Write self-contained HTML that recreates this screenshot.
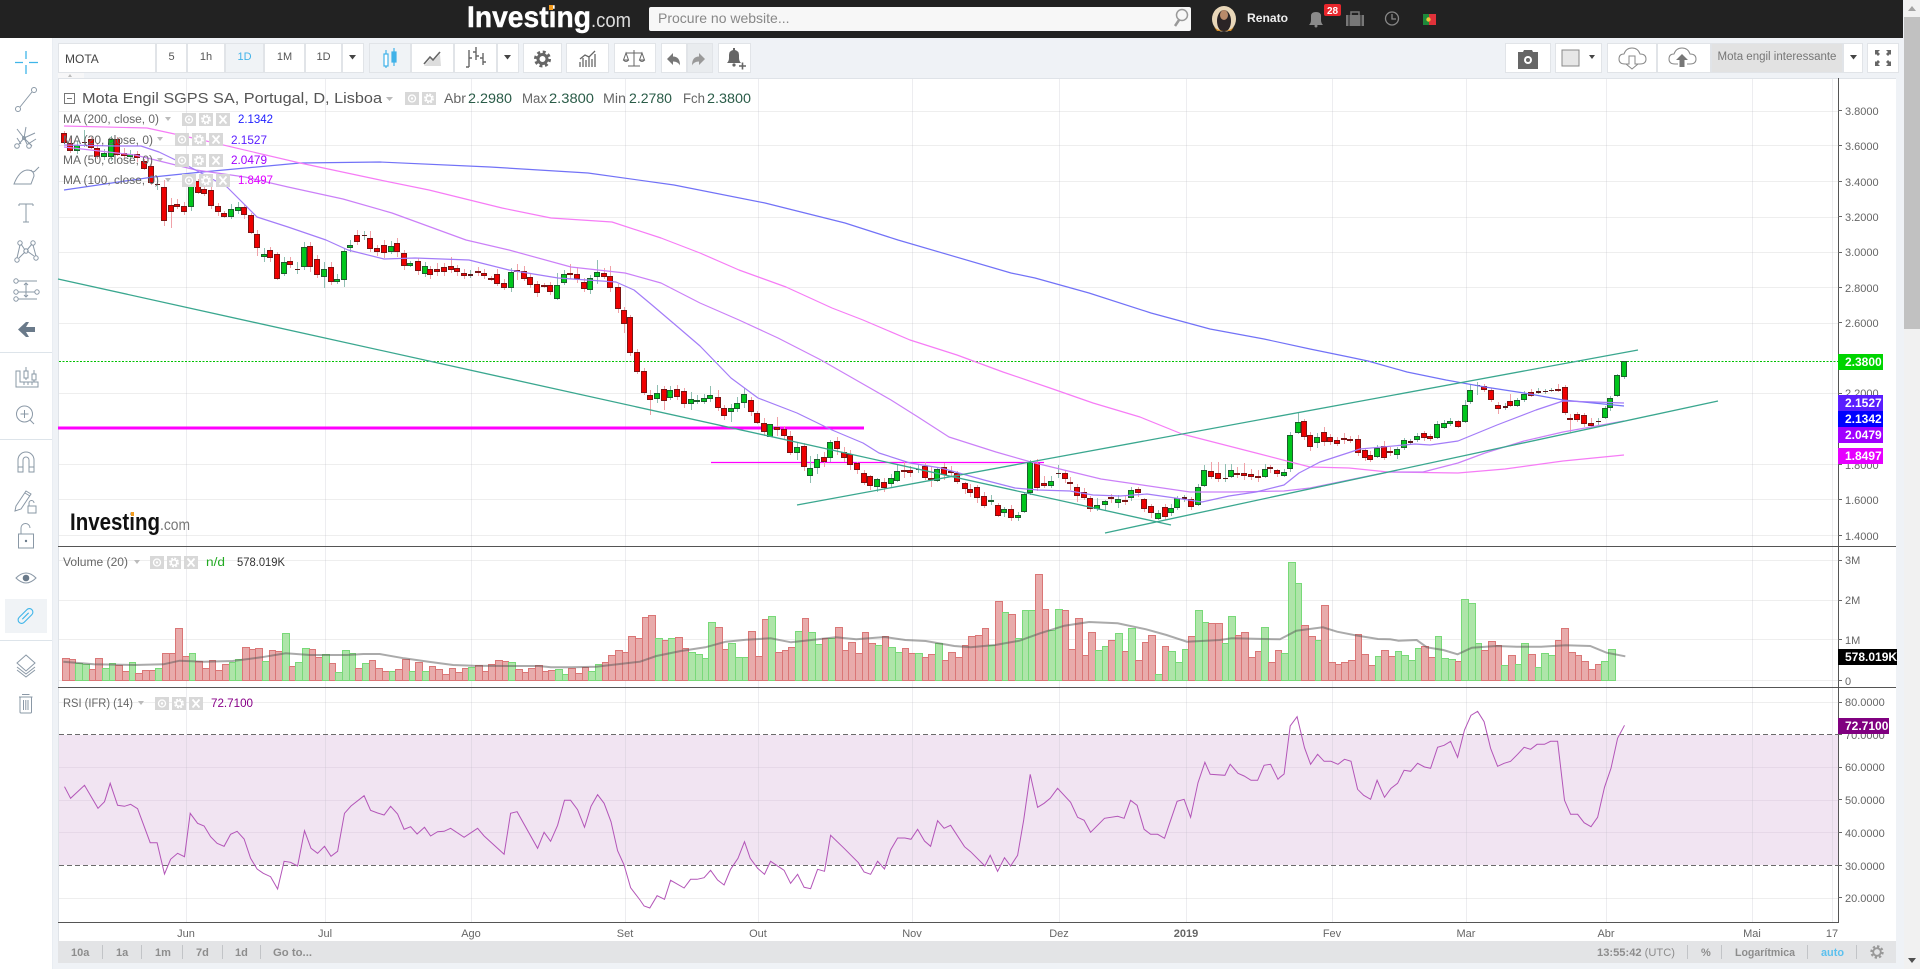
<!DOCTYPE html>
<html lang="pt"><head><meta charset="utf-8"><title>Mota Engil SGPS SA - Investing.com</title>
<style>
html,body{margin:0;padding:0;width:1920px;height:969px;overflow:hidden;background:#eff2f6;font-family:"Liberation Sans",sans-serif}
.a{position:absolute;box-sizing:border-box}
.b{position:absolute;top:43px;height:30px;background:#fff;border:1px solid #e1e4e8;box-sizing:border-box;color:#555;font-size:11px;line-height:27px;text-align:center}
svg{position:absolute;left:0;top:0}
text{font-family:"Liberation Sans",sans-serif}
</style></head><body>
<div class="a" style="left:0;top:0;width:1903px;height:38px;background:#222"></div>
<div class="a" style="left:649px;top:7px;width:542px;height:24px;background:#f7f7f7;border-radius:2px;color:#888;font-size:14px;line-height:23px;padding-left:9px">Procure no website...</div>
<div class="a" style="left:0;top:38px;width:52px;height:931px;background:#fff"></div>
<div class="a" style="left:5px;top:599px;width:42px;height:34px;background:#f0f3f6"></div>
<div class="a" style="left:58px;top:78px;width:1838px;height:863px;background:#fff;border:1px solid #dfe3e8;border-width:1px 0 0 1px"></div>
<div class="a" style="left:58px;top:941px;width:1838px;height:22px;background:#e3e4e6"></div>
<div class="a" style="left:1904px;top:0;width:16px;height:969px;background:#f1f1f1"></div>
<div class="a" style="left:1904px;top:17px;width:16px;height:312px;background:#c1c1c1"></div>

<div class="b" style="left:58px;width:98px;text-align:left;padding-left:6px;font-size:12px;line-height:30px;color:#444">MOTA</div>
<div class="b" style="left:156px;width:31px">5</div>
<div class="b" style="left:187px;width:38px">1h</div>
<div class="b" style="left:225px;width:39px;background:#f0f3f6;color:#41b2e8">1D</div>
<div class="b" style="left:264px;width:41px">1M</div>
<div class="b" style="left:305px;width:37px">1D</div>
<div class="b" style="left:342px;width:22px"></div>
<div class="b" style="left:369px;width:42px;background:#f0f3f6"></div>
<div class="b" style="left:411px;width:43px"></div>
<div class="b" style="left:454px;width:43px"></div>
<div class="b" style="left:497px;width:22px"></div>
<div class="b" style="left:523px;width:39px"></div>
<div class="b" style="left:566px;width:43px"></div>
<div class="b" style="left:614px;width:42px"></div>
<div class="b" style="left:661px;width:26px"></div>
<div class="b" style="left:687px;width:26px;background:#e9ecef"></div>
<div class="b" style="left:718px;width:33px"></div>
<div class="b" style="left:1505px;width:46px"></div>
<div class="b" style="left:1555px;width:47px"></div>
<div class="b" style="left:1607px;width:50px"></div>
<div class="b" style="left:1657px;width:54px"></div>
<div class="b" style="left:1711px;width:132px;background:#e2e2e2;color:#777;font-size:11.5px;line-height:27px;white-space:nowrap">Mota engil interessante</div>
<div class="b" style="left:1843px;width:20px"></div>
<div class="b" style="left:1867px;width:32px"></div>

<svg width="1920" height="969" viewBox="0 0 1920 969">
<defs>
<g id="t2">
<rect width="14" height="13" fill="#d8d8d8"/><rect x="17" width="14" height="13" fill="#d8d8d8"/>
<circle cx="7" cy="6.500" r="3.500" fill="none" stroke="#fff" stroke-width="1.300"/><circle cx="7" cy="6.500" r="1.200" fill="#fff"/>
<circle cx="24" cy="6.500" r="3.800" fill="none" stroke="#fff" stroke-width="2.400" stroke-dasharray="1.800 1.200"/><circle cx="24" cy="6.500" r="2.800" fill="none" stroke="#fff" stroke-width="1.500"/>
</g>
<g id="t3">
<use href="#t2"/>
<rect x="34" width="14" height="13" fill="#d8d8d8"/><path d="M37.500 2.500l7 8M44.500 2.500l-7 8" stroke="#fff" stroke-width="1.800"/>
</g>
</defs>
<g id="chart"></g>

<!-- Top logo -->
<text x="467" y="27" font-size="30" font-weight="bold" fill="#fff" stroke="#fff" stroke-width=".4" textLength="124" lengthAdjust="spacingAndGlyphs">Investing</text>
<text x="591" y="27" font-size="20" fill="#ddd" textLength="40" lengthAdjust="spacingAndGlyphs">.com</text>
<rect x="549" y="5" width="4" height="5" fill="#f39c1f"/>
<!-- Search icon -->
<circle cx="1182" cy="15" r="5.500" fill="none" stroke="#999" stroke-width="1.500"/><path d="M1179 20l-4 6" stroke="#999" stroke-width="2.500"/>
<!-- Avatar -->
<ellipse cx="1224" cy="19" rx="12" ry="13" fill="#e8d6b8"/><ellipse cx="1224" cy="21" rx="7" ry="11" fill="#2b2426"/><ellipse cx="1224" cy="15" rx="4" ry="5" fill="#b98a6a"/><path d="M1214 27q10 8 20 0l-3 4h-14z" fill="#d28a22"/>
<text x="1247" y="22" font-size="12" font-weight="bold" fill="#eee" textLength="41" lengthAdjust="spacingAndGlyphs">Renato</text>
<!-- Bell -->
<path d="M1309 25q2-2 2-5v-4q0-4 5-4t5 4v4q0 3 2 5z" fill="#8a8a8a"/><circle cx="1316" cy="26" r="1.500" fill="#8a8a8a"/>
<rect x="1324" y="4" width="17" height="12" rx="2" fill="#e8262c"/><text x="1332.500" y="14" font-size="10" font-weight="bold" fill="#fff" text-anchor="middle">28</text>
<!-- Briefcase -->
<rect x="1346" y="15" width="18" height="11" fill="#777"/><path d="M1351 15v-3h8v3" fill="none" stroke="#777" stroke-width="1.500"/><path d="M1349 15v11M1361 15v11" stroke="#222"/>
<!-- Clock -->
<circle cx="1392" cy="18.500" r="6.500" fill="none" stroke="#888" stroke-width="1.300"/><path d="M1392 14v5h4" fill="none" stroke="#888" stroke-width="1.300"/>
<!-- Flag -->
<rect x="1423" y="14" width="6" height="11" fill="#1d8a3a"/><rect x="1429" y="14" width="7" height="11" fill="#e0323a"/><circle cx="1428.500" cy="19.500" r="2.200" fill="#e8c33a"/>

<!-- Toolbar icons -->
<g fill="#444"><path d="M349 55h7l-3.500 4.500zM504 55h7l-3.500 4.500zM1589 55h6l-3 4zM1850 55h7l-3.500 4.500z"/></g>
<g stroke="#41b2e8" fill="none" stroke-width="1.200"><rect x="384" y="54" width="4" height="12" fill="#fff"/><path d="M386 50v4M386 66v2M394 48v4M394 62v4"/><rect x="392" y="52" width="4" height="10" fill="#41b2e8"/></g>
<path d="M424 66l6-7 3 2 7-7 1 12z" fill="#ddd"/><path d="M424 64l6-7 3 3 7-8" fill="none" stroke="#666" stroke-width="1.600"/>
<path d="M469 50v17M466 67h3M469 58h3M476 47v13M473 52h3M476 56h3M483 53v12M480 58h3M483 62h3" fill="none" stroke="#666" stroke-width="1.400"/>
<g transform="translate(542.500 59)" fill="none" stroke="#666"><circle r="7" stroke-width="3" stroke-dasharray="2.900 2.600"/><circle r="4.500" stroke-width="3"/></g>
<path d="M580 67V62M583 67V58M586 67V60M589 67V56M592 67V59M595 67V54M580 59l5-4 4 2 6-6" fill="none" stroke="#666" stroke-width="1.300"/>
<path d="M634 50v16M628 66h12M626 53h16M626 53l-2.500 7h5zM642 53l-2.500 7h5zM623.500 60q2.500 3 5 0M639.500 60q2.500 3 5 0" fill="none" stroke="#666" stroke-width="1"/>
<path d="M667 59l6-6v3.500q7 0 7 9q-2-4-7-4v3.500z" fill="#777"/>
<path d="M705 59l-6-6v3.500q-7 0-7 9q2-4 7-4v3.500z" fill="#999"/>
<path d="M727 63q2-2 2-5v-3q0-4 4-5v-2h2v2q4 1 4 5v3q0 3 2 5z" fill="#666"/><circle cx="734" cy="65" r="1.600" fill="#666"/><path d="M739 66h7M742.500 62.500v7" stroke="#666" stroke-width="1.600"/>
<path d="M1518 52h5l1-2h8l1 2h5v17h-20z" fill="#666"/><circle cx="1528" cy="60" r="4" fill="#fff"/><circle cx="1528" cy="60" r="2" fill="#666"/>
<rect x="1562" y="50" width="17" height="16" fill="#e7e7e7" stroke="#888"/>
<g fill="none" stroke="#888"><path d="M1628 64h-3q-6 0-6-5t5-5q2-6 8-6t8 6q6 0 6 5t-6 5h-3"/><path d="M1629 56h6v8h3l-6 5-6-5h3z"/><path d="M1678 64h-3q-6 0-6-5t5-5q2-6 8-6t8 6q6 0 6 5t-6 5h-3"/></g>
<path d="M1682 54l6 6h-3.500v7h-5v-7h-3.500z" fill="#777"/>
<path d="M1875 50h5l-2 2 2 2-2 2-2-2-1 1zM1891 50h-5l2 2-2 2 2 2 2-2 1 1zM1875 66h5l-2-2 2-2-2-2-2 2-1-1zM1891 66h-5l2-2-2-2 2-2 2 2 1-1z" fill="#666"/>

<!-- Sidebar lines -->
<path d="M0 352.500h52M0 439.500h52M0 640.500h52" stroke="#dde4ea"/>
<path d="M52.500 38v931" stroke="#e9edf2"/>
<!-- Sidebar icons -->
<path d="M26 51v8M26 65v9M15 62.500h8M29 62.500h9" stroke="#3fb5e9" stroke-width="1.300" fill="none"/>
<g fill="none" stroke="#8a98a6" stroke-width="1">
<circle cx="18" cy="109" r="2.500"/><circle cx="34" cy="90" r="2.500"/><path d="M20 107l12-15"/>
<path d="M17 129l7 9 8 8M17 138l4 6M24 138l-5 6M26 127l-2 11M35 133l-11 5 3 6M36 139l-8 5"/><circle cx="17" cy="146" r="2.300"/><circle cx="29" cy="146" r="2.300"/><circle cx="24" cy="138" r="1.500"/>
<path d="M14 184h17l3-8q0-6-7-6q-8 1-13 14zM31 170q2 3 4 1t4-4"/>
<path d="M19 204h14M19 204v2M33 204v2M26 204v18M23 222h6"/>
<circle cx="20" cy="243" r="2.200"/><circle cx="33" cy="243" r="2.200"/><circle cx="26" cy="251" r="2.200"/><circle cx="17" cy="260" r="2.200"/><circle cx="36" cy="258" r="2.200"/><path d="M21 244l4 6M32 244l-5 6M19 258l6-6M34 256l-7-5M17 258l3-13M36 256l-3-11"/>
<circle cx="16" cy="281" r="2.200"/><circle cx="16" cy="292" r="2.200"/><circle cx="16" cy="299" r="2.200"/><circle cx="37" cy="292" r="2.200"/><path d="M18 281h19M18 292h17M18 299h19M26 283v14M24 285l2-2 2 2M24 295l2 2 2-2"/>
</g>
<path d="M18 329.500l8-7.500h3l-3 5h9v5h-9l3 5h-3z" fill="#6a7a8a"/>
<g fill="none" stroke="#8a98a6" stroke-width="1">
<path d="M16 371v16h22v-5H20v-11zM24 382v3M28 382v3M32 382v3"/><rect x="24" y="371" width="4" height="7"/><path d="M26 367v4M26 378v2"/><rect x="32" y="374" width="4" height="6"/><path d="M34 370v4M34 380v2"/>
<circle cx="24.500" cy="414" r="8"/><path d="M24.500 410v8M20.500 414h8M30 420l4 4"/>
<path d="M18 472V460a8 8 0 0 1 16 0v12h-5v-12a3 3 0 0 0-6 0v12zM18 467h5M29 467h5"/>
<path d="M16 506l10-15 5 3-10 15-6 2zM25 493l5 3M36 506h-8v7h8zM29 506v-3a2.500 2.500 0 0 1 5 0"/>
<rect x="18.500" y="534" width="15" height="14"/><path d="M21 534v-6a4.500 4.500 0 0 1 9 0"/>
<path d="M16 578q10-10 20 0q-10 10-20 0z"/>
</g>
<circle cx="26" cy="578" r="3.300" fill="#6a7a8a"/><circle cx="26" cy="541" r="1.200" fill="#6a7a8a"/>
<g fill="none" stroke="#3fb5e9" stroke-width="1.100" transform="rotate(-45 25.500 616)"><rect x="16.500" y="612.500" width="18" height="7" rx="3.500"/><path d="M21 616h9"/></g>
<g fill="none" stroke="#8a98a6" stroke-width="1">
<path d="M26 655l9 8-9 8-9-8zM17 667l9 7 9-7M17 670l9 7 9-7"/>
<rect x="20" y="697" width="11.500" height="16" rx="1"/><path d="M19 697h13.500M22 694.500h7.500M23.500 700v10M25.800 700v10M28 700v10"/>
</g>

<!-- Scroll arrows, panel tab -->
<path d="M1908 11l4-5 4 5z" fill="#a3a3a3"/><path d="M1908 958l4 5 4-5z" fill="#505050"/>
<rect x="58" y="73" width="26" height="5" fill="#f7f7f8"/><path d="M68 77l2-3 2 3z" fill="#bbb"/>

<!-- Main legend -->
<rect x="64.500" y="93.500" width="10" height="10" fill="none" stroke="#777"/><path d="M67 98.500h5" stroke="#777"/>
<text x="82" y="103" font-size="15" fill="#555" textLength="300" lengthAdjust="spacingAndGlyphs">Mota Engil SGPS SA, Portugal, D, Lisboa</text>
<path d="M386 97h7l-3.500 4z" fill="#bbb"/>
<use href="#t2" x="405" y="92"/>
<g font-size="13.500"><text x="444" y="103" fill="#666" textLength="22" lengthAdjust="spacingAndGlyphs">Abr</text><text x="468" y="103" fill="#2a5c48" textLength="44" lengthAdjust="spacingAndGlyphs">2.2980</text>
<text x="522" y="103" fill="#666" textLength="25" lengthAdjust="spacingAndGlyphs">Max</text><text x="549" y="103" fill="#2a5c48" textLength="45" lengthAdjust="spacingAndGlyphs">2.3800</text>
<text x="603" y="103" fill="#666" textLength="23" lengthAdjust="spacingAndGlyphs">Min</text><text x="629" y="103" fill="#2a5c48" textLength="43" lengthAdjust="spacingAndGlyphs">2.2780</text>
<text x="683" y="103" fill="#666" textLength="22" lengthAdjust="spacingAndGlyphs">Fch</text><text x="707" y="103" fill="#2a5c48" textLength="44" lengthAdjust="spacingAndGlyphs">2.3800</text></g>

<g font-size="11.500" fill="#666">
<text x="63" y="123" textLength="96" lengthAdjust="spacingAndGlyphs">MA (200, close, 0)</text>
<text x="63" y="144" textLength="90" lengthAdjust="spacingAndGlyphs">MA (20, close, 0)</text>
<text x="63" y="164" textLength="90" lengthAdjust="spacingAndGlyphs">MA (50, close, 0)</text>
<text x="63" y="184" textLength="96" lengthAdjust="spacingAndGlyphs">MA (100, close, 0)</text>
<text x="63" y="566" textLength="65" lengthAdjust="spacingAndGlyphs">Volume (20)</text>
<text x="63" y="707" textLength="70" lengthAdjust="spacingAndGlyphs">RSI (IFR) (14)</text>
</g>
<use href="#t3" x="182" y="113"/><use href="#t3" x="175" y="133"/><use href="#t3" x="175" y="154"/><use href="#t3" x="182" y="174"/><use href="#t3" x="150" y="556"/><use href="#t3" x="155" y="697"/>
<g fill="#bbb"><path d="M165 117h6l-3 4zM157 137h6l-3 4zM157 158h6l-3 4zM165 178h6l-3 4zM134 560h6l-3 4zM138 701h6l-3 4z"/></g>
<g font-size="11.500">
<text x="238" y="123" fill="#2222ff" textLength="35" lengthAdjust="spacingAndGlyphs">2.1342</text>
<text x="231" y="144" fill="#5a1eff" textLength="36" lengthAdjust="spacingAndGlyphs">2.1527</text>
<text x="231" y="164" fill="#a000ff" textLength="36" lengthAdjust="spacingAndGlyphs">2.0479</text>
<text x="238" y="184" fill="#e000ff" textLength="35" lengthAdjust="spacingAndGlyphs">1.8497</text>
<text x="206" y="566" fill="#22aa22" textLength="19" lengthAdjust="spacingAndGlyphs">n/d</text>
<text x="237" y="566" fill="#333" textLength="48" lengthAdjust="spacingAndGlyphs">578.019K</text>
<text x="211" y="707" fill="#880088" textLength="42" lengthAdjust="spacingAndGlyphs">72.7100</text>
</g>

<!-- Watermark -->
<text x="70" y="530" font-size="24" font-weight="bold" fill="#111" textLength="90" lengthAdjust="spacingAndGlyphs">Investing</text>
<text x="160" y="530" font-size="16" fill="#777" textLength="30" lengthAdjust="spacingAndGlyphs">.com</text>
<rect x="131" y="512" width="3" height="4" fill="#f39c1f"/>

<!-- Y axis -->
<g font-size="11" fill="#666">
<text x="1845" y="115">3.8000</text><text x="1845" y="150">3.6000</text><text x="1845" y="186">3.4000</text><text x="1845" y="221">3.2000</text><text x="1845" y="256">3.0000</text><text x="1845" y="292">2.8000</text><text x="1845" y="327">2.6000</text><text x="1845" y="397">2.2000</text><text x="1845" y="469">1.8000</text><text x="1845" y="504">1.6000</text><text x="1845" y="540">1.4000</text>
<text x="1845" y="564">3M</text><text x="1845" y="604">2M</text><text x="1845" y="644">1M</text><text x="1845" y="685">0</text>
<text x="1845" y="706">80.0000</text><text x="1845" y="739">70.0000</text><text x="1845" y="771">60.0000</text><text x="1845" y="804">50.0000</text><text x="1845" y="837">40.0000</text><text x="1845" y="870">30.0000</text><text x="1845" y="902">20.0000</text>
</g>
<path d="M1838 110.500h4M1838 145.500h4M1838 181.500h4M1838 216.500h4M1838 252.500h4M1838 287.500h4M1838 322.500h4M1838 393.500h4M1838 464.500h4M1838 499.500h4M1838 535.500h4M1838 560.500h4M1838 600.500h4M1838 639.500h4M1838 680.500h4M1838 702.500h4M1838 734.500h4M1838 767.500h4M1838 799.500h4M1838 832.500h4M1838 865.500h4M1838 897.500h4" stroke="#666"/>
<g font-size="12" font-weight="bold" fill="#fff">
<rect x="1838" y="354" width="45" height="16" fill="#00d400"/><text x="1845" y="366">2.3800</text>
<rect x="1838" y="395" width="45" height="16" fill="#5a1eff"/><text x="1845" y="407">2.1527</text>
<rect x="1838" y="411" width="45" height="16" fill="#0000ff"/><text x="1845" y="423">2.1342</text>
<rect x="1838" y="427" width="45" height="16" fill="#a000ff"/><text x="1845" y="439">2.0479</text>
<rect x="1838" y="448" width="45" height="16" fill="#e600ff"/><text x="1845" y="460">1.8497</text>
<rect x="1838" y="649" width="59" height="16" fill="#000"/><text x="1845" y="661">578.019K</text>
<rect x="1838" y="718" width="51" height="16" fill="#800080"/><text x="1845" y="730">72.7100</text>
</g>

<!-- Time axis -->
<g font-size="11" fill="#666" text-anchor="middle">
<text x="186" y="937">Jun</text><text x="325" y="937">Jul</text><text x="471" y="937">Ago</text><text x="625" y="937">Set</text><text x="758" y="937">Out</text><text x="912" y="937">Nov</text><text x="1059" y="937">Dez</text><text x="1186" y="937" font-weight="bold">2019</text><text x="1332" y="937">Fev</text><text x="1466" y="937">Mar</text><text x="1606" y="937">Abr</text><text x="1752" y="937">Mai</text><text x="1832" y="937">17</text>
</g>
<!-- Bottom bar -->
<g font-size="11" font-weight="bold" fill="#8d8d8d">
<text x="71" y="956">10a</text><text x="116" y="956">1a</text><text x="155" y="956">1m</text><text x="196" y="956">7d</text><text x="235" y="956">1d</text><text x="273" y="956" textLength="39" lengthAdjust="spacingAndGlyphs">Go to...</text>
<text x="1597" y="956" textLength="78" lengthAdjust="spacingAndGlyphs">13:55:42 <tspan font-weight="normal">(UTC)</tspan></text><text x="1701" y="956">%</text><text x="1735" y="956" textLength="60" lengthAdjust="spacingAndGlyphs">Logarítmica</text><text x="1821" y="956" fill="#5bc0ee" textLength="23" lengthAdjust="spacingAndGlyphs">auto</text>
</g>
<path d="M102.500 945v14M141.500 945v14M182.500 945v14M222.500 945v14M260.500 945v14M1687.500 945v14M1721.500 945v14M1807.500 945v14M1856.500 945v14" stroke="#c2c4c7"/>
<g transform="translate(1877 952)" fill="none" stroke="#999"><circle r="5.500" stroke-width="2.400" stroke-dasharray="2.300 2"/><circle r="3.800" stroke-width="1.800"/></g>
</svg>

<script>
(function(){
var h='';
// grids
var vg=[186,325,471,625,758,912,1059,1186,1332,1466,1606,1752,1832];
var hg=[111,145,181,217,252,287,323,393,464,499,535,560,600,639,680,702,767,800,832,898];
h+='<rect x="59" y="735" width="1779" height="130" fill="#f1e4f2"/>';
hg.forEach(function(y){h+='<path d="M59 '+(y+.5)+'H1838" stroke="#eeeeee"/>';});
hg.forEach(function(y){if(y>735&&y<865)h+='<path d="M59 '+(y+.5)+'H1838" stroke="#e6d8e8"/>';});
vg.forEach(function(x){h+='<path d="M'+(x+.5)+' 79V922" stroke="rgba(190,190,200,.28)"/>';});
h+='<path d="M59 734.500H1838M59 865.500H1838" stroke="#6b6b6b" stroke-dasharray="5 3"/>';
h+='<path d="M58 546.500H1896M58 687.500H1896" stroke="#555"/><path d="M58 922.500H1838.500M1838.500 78V923" stroke="#555" fill="none"/>';
h+='<path d="M59 361.500H1838" stroke="#00c000" stroke-dasharray="2 1.500"/>';

// volume
var v1='r355 r358 g370 g372 r388 r355 g385 g370 r375 r393 g367 r400 r391 r391 g385 r340 r340 r265 r349 g340 r362 r385 r361 r391 r373 g365 g358 r322 r328 r325 g363 r330 r334 g280 r378 g367 g325 r328 r352 g343 r370 g397 g331 g340 r385 g370 r361 r385 r394 g394 r388 r357 g394 r367 g394 r379 r388 r403 r385 r397 r385 g382 r376 r394 r373 r361 r364 g367 r388 r397 r385 r376 r394 r391 g388 g403 r385 r400 r382 g394 g373 r367 r346 r331 r337 r289 r295';
var v2='r232 r226 g295 r300 g295 r292 r325 g337 g343 g355 g247 r262 r328 g310 g352 g352 r274 r349 r238 g229 r337 r331 r322 g274 r235 g277 g313 r295 g295 r262 r331 r307 r340 r277 r310 g316 r289 g322 g337 r325 r340 g340 r352 r343 g310 r361 r337 r352 r316 r289 r286 r265 g316 r184 g217 r223 g295 g211 g211 r103 r208 g270 g208 r211 r328 r235 r346 r277 g331 g319 r301 g280 r334 g265 r361 r307 r286 g403 r319 g334 g367 g328 r289 g211 g247 r250 r250 g310 g229 r286 r277 r352 r334 g262 r367 r331';
var v3='g340 g67 g130 r256 r289 g301 r196 r367 r373 r367 r361 r283 r343 r376 g349 r331 r349 g334 g346 g361 g325 r319 r352 g289 g355 g358 r364 g178 g190 g310 r331 r304 r316 g376 r346 g373 g310 r343 g382 g340 g346 r301 r265 r337 r346 r364 r388 r373 g364 g328';
var vt=(v1+' '+v2+' '+v3).split(' ');
var st=(1608-62)/(vt.length-1);
vt.forEach(function(t,i){
 var y=Math.round(540+ +t.slice(1)/3), x=Math.round(62+i*st), nx=Math.round(62+(i+1)*st), g=t[0]=='g';
 h+='<rect x="'+(x+.5)+'" y="'+(y+.5)+'" width="'+(nx-x)+'" height="'+(680-y)+'" fill="'+(g?'#aee5a9':'#e8abab')+'" stroke="'+(g?'#78d978':'#da7676')+'"/>';
});
function pl(x0,sx,y0,a){var o=[];for(var i=0;i<a.length;i+=2)o.push((x0+a[i]/sx).toFixed(1)+','+(y0+a[i+1]/3).toFixed(1));return o.join(' ');}
var vm=pl(0,2.45,540,[155,365,230,373,330,375,400,373,440,362,500,365,570,363,640,352,700,340,760,345,850,345,890,342,930,342,990,355,1050,365,1110,375,1160,377,1250,378,1320,378,1350,382,1400,382,1460,380,1568,365])+' '+pl(640,2.45,540,[40,348,100,333,160,322,210,305,260,299,320,295,370,307,420,300,480,292,530,298,600,291,650,300,700,303,770,318,810,322,870,315,930,302,980,280,1040,257,1100,246,1170,250,1240,268,1290,285,1340,305,1420,300,1450,295,1568,298])+' '+pl(1280,2.45,540,[20,285,40,272,105,262,140,275,190,287,240,297,270,298,290,302,335,300,360,322,400,330,435,343,470,323,530,318,580,320,640,320,700,316,760,318,800,338,846,349]);
h+='<polyline points="'+vm+'" fill="none" stroke="#555" stroke-opacity=".5" stroke-width="2"/>';

// RSI
var r=pl(0,2.45,700,[158,260,173,295,207,256,240,325,256,305,270,250,288,316,305,319,320,313,337,326,368,428,385,428,403,522,418,478,435,460,452,470,466,340,484,370,500,378,516,410,532,430,549,439,565,403,581,394,598,417,614,475,630,507,645,520,663,530,680,567,696,484,712,487,729,498,746,392,762,445,778,460,795,439,811,469,827,454,844,340,860,318,892,287,908,331,925,339,941,345,957,319,974,342,990,388,1006,380,1022,402,1040,382,1055,408,1072,395,1088,394,1104,385,1137,412,1170,385,1186,408,1235,463,1251,340,1267,335,1317,445,1333,397,1349,424,1366,376,1383,301,1398,301,1415,329,1432,382,1448,319,1464,284,1480,310,1497,365,1513,452,1529,495,1545,563,1568,600])+' '+pl(640,2.45,700,[10,618,24,624,42,587,60,598,75,541,108,564,124,538,140,538,157,533,173,511,190,540,206,555,222,508,240,475,256,425,270,475,288,505,305,523,320,484,353,511,369,550,386,523,402,562,418,566,435,508,452,514,467,406,500,445,535,488,549,516,565,523,582,484,599,507,614,450,631,414,649,414,664,418,680,388,697,423,712,439,729,362,745,385,761,376,795,440,810,455,845,498,858,466,876,514,893,473,908,498,925,466,940,360,956,223,974,322,990,310,1005,295,1023,265,1055,307,1072,352,1088,361,1104,397,1138,355,1170,349,1186,355,1202,301,1218,316,1235,388,1251,403,1268,403,1285,415,1316,304,1333,298,1349,352,1367,248,1384,187,1397,223,1433,226,1446,193,1465,220,1480,228,1497,241,1513,241,1529,196,1545,193,1563,238])+' '+pl(1280,2.45,700,[0,232,10,222,25,78,42,50,60,143,75,193,92,163,108,184,125,184,142,193,158,178,174,184,190,268,205,286,222,298,238,241,256,292,272,265,288,250,304,211,320,214,337,190,354,201,369,205,386,142,402,136,418,124,435,172,452,90,468,46,484,34,500,65,516,145,533,199,549,190,565,184,582,163,598,142,614,148,630,133,648,133,663,124,680,124,697,301,712,343,729,343,745,368,762,380,778,352,795,262,811,205,827,115,844,76]);
h+='<polyline points="'+r+'" fill="none" stroke="#b355b8" stroke-width="1"/>';

// magenta lines
h+='<path d="M58 428H864" stroke="#ff00ff" stroke-width="3"/><path d="M711 462.500H1044" stroke="#ff00ff" stroke-width="1.200"/>';

// candles: color,x,top,bottom[,wickTop,wickBottom]
var c='r64,133,143 r70,143,151 g77,145,151 d84,142,143,130,147 r91,139,148 r97,148,157 g104,153,157 g111,139,157 r117,139,155 r124,153,156 g130,154,157 r137,154,158 r144,161,169 r151,166,183 d157,184,185,176,190 r164,187,221,180,226 r171,205,212,198,228 r177,204,207 r184,206,212 g191,182,207 r198,181,193 r204,189,194 r211,190,206 r218,206,212 r224,213,217 g231,209,217 g238,207,211,202,214 r244,207,215 r251,215,233 r257,234,248,230,256 g264,254,257,248,262 r270,250,258 r277,254,279 g284,262,274 r290,261,265 d297,269,270,262,274 g304,247,267,242,270 r310,246,267,242,272 r317,259,275 g324,269,277,262,288 r331,267,282,262,285 g337,279,282 g344,251,280,248,287 g350,245,248,240,252 r357,235,242,230,245 d364,235,236,231,240 r370,238,249,231,252 r377,248,252 r384,245,253,240,258 g391,246,252 r397,243,252,238,257 r404,253,266 g410,263,266 r418,261,271,258,275 g425,266,274 r430,269,275 r437,269,272,263,276 r444,267,272,263,276 r451,266,270,257,273 r457,268,272 r464,273,276,269,279 d470,274,276,270,278 r478,271,273 r484,273,276,269,279 r491,278,280 r497,274,284 r504,283,288,279,290 g511,272,288,268,292 r517,270,272,264,280 r524,271,279 r530,277,285 r537,284,293,281,297 r544,285,287 r550,285,292,282,295 g557,285,299,273,300 g564,274,283,270,285 r570,273,275,264,279 r577,274,279,267,283 r584,282,289 g590,278,290 g597,272,277,260,284 r604,273,277 r610,276,288,266,292 r618,287,309 r624,310,324,307,333 r630,317,353,315,356 r637,352,372,349,374 r644,371,393,368,395 r650,395,400,390,415 g657,393,399,385,403 r664,389,401,386,410 g670,390,398,386,400 r677,389,397,385,400 r684,391,404,388,408 g691,399,404,392,410 g697,400,402,395,404 g704,398,402,394,404 g710,395,399,386,402 r718,397,408,390,411 r724,408,416 g731,408,412,404,422 g737,403,409,397,412 g744,394,403,388,408 r751,400,412,397,416 r757,413,423,411,424 r764,423,432,418,436 g770,424,437,424,437 r777,427,430,417,436 r784,429,436,426,440 r790,436,453 g797,447,453,442,460 r804,446,467 g810,468,476,456,483 g817,459,468,454,474 r824,457,462,452,467 g830,442,458,440,462 r837,441,449,437,455 r844,452,458,447,462 r850,454,465,450,470 r857,463,470,462,474 r864,473,483,470,485 r870,476,486,475,490 g877,479,487,478,492 r884,482,488,478,492 g891,478,484,474,488 g897,471,481,465,482 r904,470,472,462,478 r910,470,473,466,477 d918,469,470,464,473 r925,466,478,462,480 r931,478,480,466,487 g937,469,481,467,482 r944,467,475,463,480 r951,471,473,466,476 r957,473,482,471,484 r965,483,489,482,494 r970,489,493,484,497 r977,487,498,485,503 r984,496,506,492,508 g991,500,502,495,505 r998,505,516,503,517 g1004,509,513,507,517 r1011,509,518 g1018,515,518,512,521 g1024,494,512 g1030,462,493,460,495 r1037,463,488 r1044,483,486,476,488 g1051,481,486,476,488 d1058,473,474,465,478 r1065,473,479,470,483 r1070,482,484,477,490 r1077,487,496,484,502 r1084,492,498,488,500 r1090,498,509,496,512 g1097,505,509,498,511 g1105,501,505,500,510 r1111,497,499,494,503 g1118,499,503,495,508 r1125,500,502,496,505 g1131,490,498,487,501 r1138,489,493,487,497 r1144,499,509,498,512 r1151,506,513,504,518 g1158,513,519,510,520 r1165,507,517,504,520 g1171,508,513,504,516 g1177,498,508,496,510 d1184,497,499,495,502 r1191,499,507,497,510 g1198,487,505,484,506 g1204,470,486,465,487 r1211,471,477,462,479 r1218,473,479,462,482 d1225,478,479,464,482 g1231,470,477,464,478 r1237,473,475,467,478 r1244,473,476,463,480 r1251,474,477,469,480 r1258,476,477,470,482 g1265,469,477,464,478 r1270,467,469,465,473 r1277,470,474,469,477 g1284,472,476,469,477 g1290,435,469,432,472 g1298,422,433,413,434 r1304,421,437,419,440 r1310,435,447 g1317,437,443,433,448 r1324,432,442,427,446 r1330,437,442,434,445 r1337,440,444,437,446 r1344,438,440,433,444 r1350,439,440,436,443 r1358,439,453 r1365,450,458,449,461 r1370,455,460,451,462 g1377,448,457,445,458 r1384,446,458,441,460 r1390,451,453,447,456 g1397,449,455,447,459 g1404,440,448,438,450 d1410,441,443,439,445 g1417,436,440,433,442 r1424,433,438,431,441 r1430,436,439,434,441 g1437,424,438,421,439 g1444,423,428,420,429 g1450,421,424,418,426 r1458,421,427,420,428 g1465,405,422,400,423 g1470,390,402,384,404 d1477,385,386,382,395 r1484,386,390,384,392 r1491,390,400,388,402 r1498,405,409,402,414 d1505,406,408,403,410 r1510,401,406,394,407 g1517,400,406,398,407 g1524,394,400,391,402 r1531,392,396,389,397 d1538,391,393,388,394 d1545,391,392,389,394 d1551,390,391,388,392 r1558,389,391,384,392 r1565,387,413,385,415 r1570,418,419,414,432 r1577,414,420,412,422 r1584,415,424,413,427 r1591,423,426,418,427 d1598,421,422,418,425 g1605,408,418,406,419 g1610,398,408,396,411 g1617,375,396,374,397 g1624,361,377,361,379';
c.split(' ').forEach(function(s,i){
 var t=s[0],p=s.slice(1).split(',').map(Number),x=p[0],a=p[1],b=p[2];
 var w1=p.length>3?p[3]:a-2-(i*7)%4, w2=p.length>4?p[4]:b+1+(i*5)%4;
 var wc=t=='r'?'#f0a2a8':'#90bfb2';
 h+='<path d="M'+x+'.5 '+w1+'V'+w2+'" stroke="'+wc+'"/>';
 if(t=='d'){h+='<rect x="'+(x-2)+'" y="'+a+'" width="5" height="'+Math.max(1,b-a)+'" fill="#5a1a1a"/>';}
 else h+='<rect x="'+(x-2.5)+'" y="'+a+'.5" width="5" height="'+Math.max(1,b-a-1)+'" fill="'+(t=='r'?'#ee0000':'#00c61c')+'" stroke="'+(t=='r'?'#7a1414':'#1c5e2c')+'"/>';
});

// MAs
function ma(col,pts){h+='<polyline points="'+pts+'" fill="none" stroke="'+col+'" stroke-width="1.200" stroke-linejoin="round"/>';}
ma('#7272f7','64,190 153,177 202,172 300,163 380,162 490,167 588,173 674,185 765,203 845,223 898,240 1011,273 1035,278 1089,293 1151,313 1210,329 1264,339 1310,349 1349,357 1368,361 1407,372 1446,380 1485,387 1524,393 1563,400 1624,406');
ma('#f67cf6','64,126 147,128 202,140 300,163 380,180 429,190 502,208 551,218 612,222 661,238 700,253 739,270 786,287 832,308 863,320 910,340 957,355 1003,372 1050,388 1093,403 1140,417 1182,434 1217,443 1256,453 1310,467 1349,468 1388,472 1458,473 1505,469 1563,461 1624,455');
ma('#cb80f8','64,147 135,155 196,170 245,177 288,187 343,199 392,213 466,240 509,250 571,267 625,273 661,283 700,303 739,320 778,338 821,360 856,380 891,400 918,417 949,437 996,452 1031,462 1101,479 1190,492 1233,492 1284,491 1310,488 1388,472 1423,472 1458,463 1485,453 1524,441 1563,432 1624,421');
ma('#a37cf8','64,145 116,146 141,146 159,152 190,167 227,187 257,217 288,227 326,240 348,250 384,259 415,258 469,260 509,270 558,278 616,282 634,290 652,305 679,328 700,346 731,378 758,398 797,413 832,430 863,443 879,453 910,463 941,468 984,480 1015,488 1038,490 1070,491 1093,495 1120,496 1147,494 1175,498 1202,502 1229,496 1256,492 1284,485 1299,473 1320,462 1360,449 1415,444 1430,445 1458,441 1497,425 1536,410 1563,401 1624,403');

// trendlines
h+='<g stroke="#3aa78f" stroke-width="1.300" fill="none"><path d="M58 279L1171 525"/><path d="M797 505L1638 350"/><path d="M1105 533L1718 401"/></g>';
document.getElementById('chart').innerHTML=h;
})();
</script>
</body></html>
